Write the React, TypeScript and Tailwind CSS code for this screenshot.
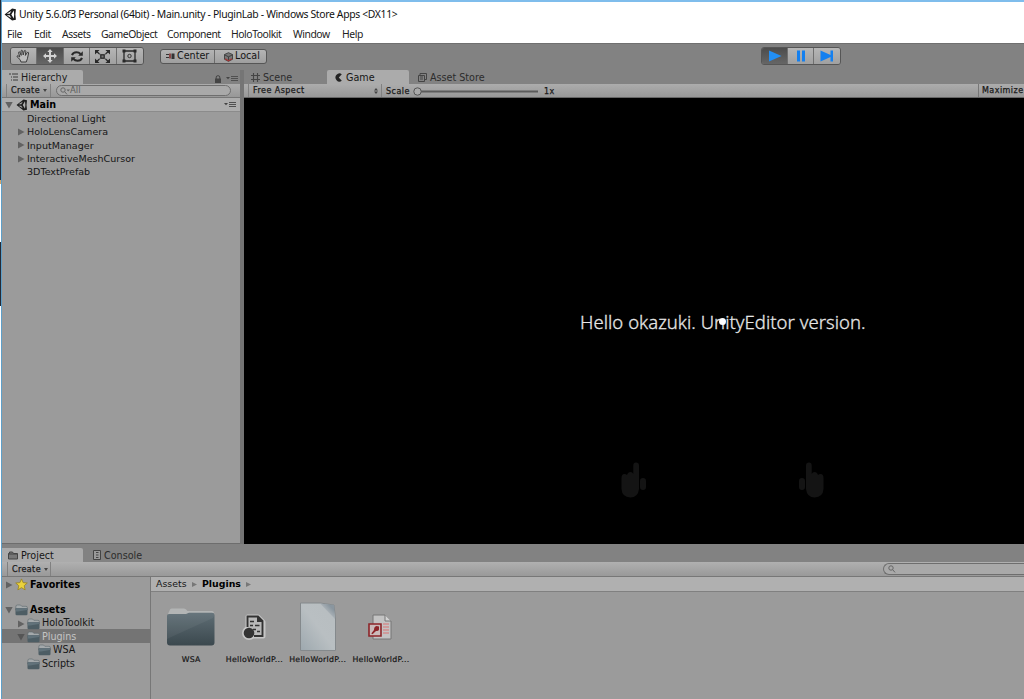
import { ReactNode } from 'react';

const menus = [
  { label: 'File', width: 'w-[27px]' },
  { label: 'Edit', width: 'w-[28px]' },
  { label: 'Assets', width: 'w-[39px]' },
  { label: 'GameObject', width: 'w-[66px]' },
  { label: 'Component', width: 'w-[64px]' },
  { label: 'HoloToolkit', width: 'w-[62px]' },
  { label: 'Window', width: 'w-[49px]' },
  { label: 'Help', width: 'w-[30px]' },
];

const sceneObjects = [
  { name: 'Directional Light', children: false },
  { name: 'HoloLensCamera', children: true },
  { name: 'InputManager', children: true },
  { name: 'InteractiveMeshCursor', children: true },
  { name: '3DTextPrefab', children: false },
];

function UnityLogo({ size = 12 }: { size?: number }) {
  return (
    <svg width={size} height={size} viewBox="0 0 24 24" className="shrink-0">
      <path
        d="M15 1 L1 12 L15 23 L22 21.5 L21 12 L22 2.5 Z M13.5 5.5 L10.5 10.5 H5 Z M5 13.5 H10.5 L13.5 18.5 Z M13.5 12 L18 4.5 L18.8 12 L18 19.5 Z"
        fill="#1c1c1c"
        fillRule="evenodd"
      />
    </svg>
  );
}

function Arrow({ open = false, light = false }: { open?: boolean; light?: boolean }) {
  return (
    <svg width="8" height="8" viewBox="0 0 8 8" fill={light ? '#555' : '#626262'} className="shrink-0">
      <path d={open ? 'M0.3 1 H7.7 L4 7.5 Z' : 'M1 0.5 L7.5 4 L1 7.5 Z'} />
    </svg>
  );
}

function PanelMenu() {
  return (
    <svg width="12" height="7" viewBox="0 0 12 7" className="shrink-0">
      <path d="M0 2 H4 L2 4.3 Z" fill="#444" />
      <path d="M5 1.5 H12 M5 3.5 H12 M5 5.5 H12" stroke="#505050" strokeWidth="1" />
    </svg>
  );
}

function Folder() {
  return (
    <svg width="13" height="12" viewBox="0 0 13 12" className="shrink-0">
      <path d="M0.8 3 Q0.8 1 2.2 1 H5.5 L6.8 2.3 H11 Q12.3 2.3 12.3 3.5 V6 H0.8 Z" fill="#a4a9ab" stroke="#5d686d" strokeWidth="0.6" />
      <path d="M0.5 4.2 H12.5 V10 Q12.5 11.2 11.3 11.2 H1.7 Q0.5 11.2 0.5 10 Z" fill="#4d5d64" />
      <path d="M1 4.6 H12 V6 L3 7.6 H1 Z" fill="#61727a" />
    </svg>
  );
}

function ToolButton({ active = false, last = false, children }: { active?: boolean; last?: boolean; children: ReactNode }) {
  return (
    <div
      className={`flex w-[26.6px] items-center justify-center ${last ? '' : 'border-r border-[#707070]'} ${
        active ? 'bg-linear-to-b from-[#4c4c4c] to-[#666]' : 'bg-linear-to-b from-[#b6b6b6] to-[#a0a0a0]'
      }`}
    >
      {children}
    </div>
  );
}

function Toolbar() {
  return (
    <div className="flex h-[27px] shrink-0 items-start border-t border-[#707070] bg-[#828282] pt-[3px] pl-[8px]">
      <div className="flex h-[18px] w-[134px] overflow-hidden rounded-[3px] border border-[#565656]">
        <ToolButton>
          <svg width="15" height="14" viewBox="0 0 15 14" fill="#bdbdbd" stroke="#3d3d3d" strokeWidth="1">
            <path d="M5 13 L4 10.5 L1.2 8 Q0.6 6.8 1.8 6.6 L3.8 8 L2.5 3.5 Q2.8 2.2 3.8 3.2 L5.2 6.4 L5 1.8 Q5.8 0.6 6.6 1.8 L7.2 6 L8.3 1.8 Q9.4 0.9 9.8 2.2 L9.4 6.4 L11.3 3.5 Q12.5 2.8 12.6 4 L11.4 9.8 L10.2 13 Z" />
          </svg>
        </ToolButton>
        <ToolButton active>
          <svg width="14" height="14" viewBox="0 0 14 14" fill="#d2d2d2">
            <path d="M7 0 L9.7 3 H8 V6 H11 V4.3 L14 7 L11 9.7 V8 H8 V11 H9.7 L7 14 L4.3 11 H6 V8 H3 V9.7 L0 7 L3 4.3 V6 H6 V3 H4.3 Z" />
          </svg>
        </ToolButton>
        <ToolButton>
          <svg width="14" height="13" viewBox="0 0 14 13">
            <path d="M2 5.2 Q3 2.3 6.5 2.3 Q9 2.3 10.5 4 M12 7.8 Q11 10.7 7.5 10.7 Q5 10.7 3.5 9" fill="none" stroke="#292929" strokeWidth="2" />
            <path d="M12.8 1.2 V5.8 H8.2 Z M1.2 11.8 V7.2 H5.8 Z" fill="#292929" />
          </svg>
        </ToolButton>
        <ToolButton>
          <svg width="15" height="13" viewBox="0 0 15 13" fill="#292929">
            <path d="M0 0 H4.6 L0 4.4 Z M15 0 V4.4 L10.4 0 Z M0 13 V8.6 L4.6 13 Z M15 13 H10.4 L15 8.6 Z" />
            <path d="M1 1 L14 12 M14 1 L1 12" stroke="#292929" strokeWidth="1.4" />
            <rect x="4.5" y="3.5" width="6" height="6" fill="#aaa" />
            <rect x="5.8" y="4.8" width="3.4" height="3.4" fill="#777" stroke="#292929" strokeWidth="1.3" />
          </svg>
        </ToolButton>
        <ToolButton last>
          <svg width="15" height="14" viewBox="0 0 15 14" fill="#292929">
            <path d="M2 2 H13 V12 H2 Z" fill="none" stroke="#292929" strokeWidth="1.3" />
            <path d="M0.5 0.5 H3.5 V3.5 H0.5 Z M11.5 0.5 H14.5 V3.5 H11.5 Z M0.5 10.5 H3.5 V13.5 H0.5 Z M11.5 10.5 H14.5 V13.5 H11.5 Z" />
            <circle cx="7.5" cy="7" r="1.7" fill="none" stroke="#333" />
          </svg>
        </ToolButton>
      </div>

      <div className="mt-[2px] ml-4 flex h-[15px] w-[107px] overflow-hidden rounded-[3px] border border-[#565656] bg-linear-to-b from-[#b4b4b4] to-[#9f9f9f] text-[9.6px] text-[#161616]">
        <div className="flex w-[54px] items-center gap-[2px] border-r border-[#6b6b6b] pl-[5px]">
          <svg width="9" height="7" viewBox="0 0 9 7" className="shrink-0">
            <path d="M0 1.5 H3 M0 4.5 H3" stroke="#333" />
            <path d="M3 0.5 H5 V5.5 H3 Z" fill="#8b4545" />
            <path d="M5.5 0.5 H8.5 V6 H5.5 Z" fill="#333" />
          </svg>
          <span>Center</span>
        </div>
        <div className="flex items-center gap-[2px] pl-[9px]">
          <svg width="9" height="10" viewBox="0 0 9 10" className="shrink-0">
            <path d="M0.5 2.5 L4.5 0.7 L8.5 2.5 V7.3 L4.5 9.3 L0.5 7.3 Z" fill="#777" stroke="#333" strokeWidth="0.8" />
            <path d="M0.5 2.8 L4.5 4.8 L8.5 2.8 M4.5 4.8 V9" fill="none" stroke="#333" strokeWidth="0.8" />
            <path d="M1 6.8 L4.5 8.8 L8 6.8" fill="none" stroke="#a03535" strokeWidth="1.3" />
          </svg>
          <span>Local</span>
        </div>
      </div>

      <div className="ml-[494px] flex h-[18px] w-[80px] overflow-hidden rounded-[3px] border border-[#565656]">
        <ToolButton active>
          <svg width="14" height="12" viewBox="0 0 14 12">
            <path d="M1 0.5 L13.5 6 L1 11.5 Z" fill="#228ff5" />
          </svg>
        </ToolButton>
        <ToolButton>
          <svg width="10" height="12" viewBox="0 0 10 12" fill="#1480f0">
            <path d="M1 0.5 H4 V11.5 H1 Z M6 0.5 H9 V11.5 H6 Z" />
          </svg>
        </ToolButton>
        <ToolButton last>
          <svg width="14" height="12" viewBox="0 0 14 12" fill="#1480f0">
            <path d="M0.5 0.5 L10.5 5 V0.5 H13 V11.5 H10.5 V7 L0.5 11.5 Z" />
          </svg>
        </ToolButton>
      </div>
    </div>
  );
}

function Hierarchy() {
  return (
    <div className="flex w-[238px] shrink-0 flex-col">
      <div className="flex h-[14px] shrink-0 items-center justify-between pr-[2px]">
        <div className="flex h-full w-[81px] items-center gap-[3px] rounded-tr-[2px] bg-[#ababab] pl-[7px] text-[9.6px] text-[#1c1c1c]">
          <svg width="9" height="9" viewBox="0 0 9 9" stroke="#3b3b3b" className="shrink-0">
            <path d="M0 1 H2 M3 1 H9 M2 4 H3 M4 4 H9 M2 7 H3 M4 7 H9" />
          </svg>
          <span className="pt-[2px]">Hierarchy</span>
        </div>
        <div className="flex items-center gap-[5px] pt-[3px]">
          <svg width="6" height="8" viewBox="0 0 6 8">
            <path d="M1.2 4 V2 Q1.2 0.7 3 0.7 Q4.8 0.7 4.8 2 V4" fill="none" stroke="#444" />
            <path d="M0 3.5 H6 V8 H0 Z" fill="#444" />
          </svg>
          <PanelMenu />
        </div>
      </div>
      <div className="flex h-[14px] shrink-0 items-center border-b border-[#777] bg-linear-to-b from-[#acacac] to-[#989898] pl-1">
        <div className="flex h-full w-[45px] items-center gap-[3px] border-x border-[#818181] pl-[4px] text-[8px] tracking-[0.4px] text-[#1a1a1a] [-webkit-text-stroke:0.25px_#1a1a1a]">
          <span className="pt-px">Create</span>
          <svg width="4" height="3" viewBox="0 0 4 3"><path d="M0 0 H4 L2 3 Z" fill="#444" /></svg>
        </div>
        <div className="ml-[5px] flex h-[11px] w-[175px] items-center rounded-full border border-[#6e6e6e] bg-[#a9a9a9] pl-[3px] text-[8.5px] text-[#5c5c5c]">
          <svg width="10" height="8" viewBox="0 0 10 8" fill="none" stroke="#666">
            <circle cx="3" cy="3" r="2.2" />
            <path d="M4.6 4.6 L7 7.4" />
            <path d="M6.5 2.5 H10 L8.2 4.6 Z" fill="#666" stroke="none" />
          </svg>
          All
        </div>
      </div>
      <div className="flex h-[14px] shrink-0 items-center border-b border-[#8b8b8b] bg-[#adadad] pr-1 pl-[3px]">
        <Arrow open />
        <div className="ml-[3px] flex flex-1 items-center gap-[2px] text-[9.6px] font-bold text-black">
          <UnityLogo />
          <span className="pt-[2px]">Main</span>
        </div>
        <PanelMenu />
      </div>
      <div className="flex-1 border-b border-[#6d6d6d] bg-[#9b9b9b] text-[9.55px] text-[#161616]">
        {sceneObjects.map((o) => (
          <div key={o.name} className="flex h-[13.4px] items-center pl-[15px]">
            <div className="w-[10px]">{o.children && <Arrow />}</div>
            <span className="pt-[0.6px]">{o.name}</span>
          </div>
        ))}
      </div>
    </div>
  );
}

function Hand({ flip = false }: { flip?: boolean }) {
  return (
    <svg width="26" height="36" viewBox="0 0 26 36" fill="#141414" className={flip ? '-scale-x-100' : ''}>
      <path d="M0.5 16 Q0.5 12 3.5 12 Q5 12 6 13 Q7 10 9.5 10 Q11.5 10 12.3 12 V3.5 Q12.3 0.5 15 0.5 Q18 0.5 18 3.5 V27 Q17 35.5 9.3 35.5 Q1 35 0.5 27 Z" />
      <rect x="19" y="16" width="6" height="12" rx="3" />
    </svg>
  );
}

function GameView() {
  return (
    <div className="flex min-w-0 flex-1 flex-col">
      <div className="flex h-[14px] shrink-0 text-[9.6px] text-[#2c2c2c]">
        <div className="flex w-[83px] items-center gap-[3px] pl-[7px]">
          <svg width="9" height="9" viewBox="0 0 9 9" stroke="#454545" strokeWidth="1.1">
            <path d="M2.5 0 V9 M6.5 0 V9 M0 2.5 H9 M0 6.5 H9" />
          </svg>
          <span className="pt-[2px]">Scene</span>
        </div>
        <div className="flex w-[82px] items-center gap-[3px] rounded-t-[2px] bg-[#ababab] pl-[7px] text-[#161616]">
          <svg width="9" height="9" viewBox="0 0 9 9">
            <path d="M7.8 1.2 A4 4 0 1 0 7.8 7.8 L4.8 4.5 Z" fill="#222" />
          </svg>
          <span className="pt-[2px]">Game</span>
        </div>
        <div className="flex items-center gap-[3px] pl-[9px]">
          <svg width="9" height="9" viewBox="0 0 9 9" fill="none" stroke="#444">
            <path d="M0.5 2.5 H6.5 V8.5 H0.5 Z M2 2.5 V0.5 H8.5 V6.5 H6.5 M2 4 H5 M2 6 H5" />
          </svg>
          <span className="pt-[2px]">Asset Store</span>
        </div>
      </div>
      <div className="flex h-[14px] shrink-0 items-center border-b border-[#666] bg-linear-to-b from-[#acacac] to-[#989898] text-[8px] tracking-[0.45px] text-[#1a1a1a] [-webkit-text-stroke:0.25px_#1a1a1a]">
        <div className="flex h-full w-[138px] items-center justify-between border-r border-[#818181] pr-[3px] pl-1">
          <div className="flex h-full items-center border-l border-[#818181] pt-px pl-1">Free Aspect</div>
          <svg width="4" height="6" viewBox="0 0 4 6" fill="#444"><path d="M0 2.5 L2 0 L4 2.5 Z M0 3.5 L2 6 L4 3.5 Z" /></svg>
        </div>
        <span className="ml-[4px] w-[27px] pt-[2px]">Scale</span>
        <svg width="126" height="9" viewBox="0 0 126 9" className="mt-px">
          <path d="M4 4.5 H125" stroke="#5b5b5b" strokeWidth="2" />
          <circle cx="4.5" cy="4.5" r="3.7" fill="#aaa" stroke="#555" />
        </svg>
        <span className="ml-[5px] flex-1 pt-[2px]">1x</span>
        <div className="flex h-full w-[46px] items-center border-l border-[#777] pt-px pl-[3px]">Maximize</div>
      </div>
      <div className="relative flex-1 overflow-hidden bg-black">
        <span className="absolute top-[211px] left-[336px] font-['Noto_Sans'] text-[18.5px] leading-[26px] font-light tracking-[0.03px] whitespace-nowrap text-[#e6e6e6] [-webkit-text-stroke:0.3px_#e6e6e6]">
          Hello okazuki. UnityEditor version.
        </span>
        <div className="absolute top-[220px] left-[475px] h-[7px] w-[7px] rounded-full bg-white" />
        <div className="absolute top-[364px] left-[377px]"><Hand /></div>
        <div className="absolute top-[364px] left-[554px]"><Hand flip /></div>
      </div>
    </div>
  );
}

function ProjectTree() {
  return (
    <div className="w-[149px] shrink-0 border-r border-[#777] bg-[#9b9b9b] text-[9.6px] text-[#161616]">
      <div className="flex h-[13.4px] items-center gap-[2px] pt-[2px] pl-[3px] font-bold text-black">
        <Arrow />
        <svg width="13" height="13" viewBox="0 0 14 14">
          <path d="M7 1 L8.8 5 L13.2 5.4 L9.9 8.3 L10.9 12.8 L7 10.4 L3.1 12.8 L4.1 8.3 L0.8 5.4 L5.2 5 Z" fill="#ead23c" stroke="#9b8420" strokeWidth="0.9" />
        </svg>
        Favorites
      </div>
      <div className="mt-[12.2px] flex h-[13.4px] items-center gap-[2px] pt-[2px] pl-[3px] font-bold text-black">
        <Arrow open />
        <Folder />
        <span>Assets</span>
      </div>
      <div className="flex h-[13.4px] items-center gap-[2px] pt-[2px] pl-[15px]"><Arrow /><Folder />HoloToolkit</div>
      <div className="flex h-[13.4px] items-center gap-[2px] bg-[#747474] pt-[2px] pl-[15px] text-[#c4c4c4]"><Arrow open light /><Folder />Plugins</div>
      <div className="flex h-[13.4px] items-center gap-[2px] pt-[2px] pl-[36px]"><Folder />WSA</div>
      <div className="flex h-[13.4px] items-center gap-[2px] pt-[2px] pl-[25px]"><Folder />Scripts</div>
    </div>
  );
}

function Asset({ name, children }: { name: string; children: ReactNode }) {
  return (
    <div className="flex w-[63.3px] flex-col items-center">
      <div className="flex h-[50px] items-center justify-center">{children}</div>
      <span className="mt-[3px] text-[7.8px] leading-[10px] tracking-[0.3px] whitespace-nowrap text-[#161616] [-webkit-text-stroke:0.2px_#161616]">{name}</span>
    </div>
  );
}

function Project() {
  return (
    <div className="flex min-h-0 flex-1 flex-col bg-[#828282] pt-[4px]">
      <div className="flex h-[14px] shrink-0 text-[9.6px]">
        <div className="flex w-[81px] items-center gap-[3px] rounded-tr-[2px] bg-[#ababab] pl-[6px] text-[#161616]">
          <svg width="10" height="9" viewBox="0 0 10 9" fill="#777" stroke="#444">
            <path d="M0.5 2.5 V8 H9.5 V2.5 H5.5 L4.5 1 H1.5 V2.5 Z M0.5 3 H9" />
          </svg>
          <span className="pt-[2px]">Project</span>
        </div>
        <div className="flex items-center gap-[3px] pl-[10px] text-[#2c2c2c]">
          <svg width="8" height="10" viewBox="0 0 8 10" fill="#999" stroke="#444">
            <path d="M0.5 0.5 H7.5 V9.5 H0.5 Z M3 2.5 H5.5 M3 5 H5.5 M3 7.5 H5.5" />
          </svg>
          <span className="pt-[2px]">Console</span>
        </div>
      </div>
      <div className="flex h-[15px] shrink-0 items-center justify-between border-b border-[#777] bg-linear-to-b from-[#b0b0b0] to-[#999] pl-[5px]">
        <div className="flex h-full w-[44px] items-center gap-[3px] border-x border-[#818181] pl-[4px] text-[8px] tracking-[0.4px] text-[#1a1a1a] [-webkit-text-stroke:0.25px_#1a1a1a]">
          <span className="pt-[2px]">Create</span>
          <svg width="4" height="3" viewBox="0 0 4 3"><path d="M0 0 H4 L2 3 Z" fill="#444" /></svg>
        </div>
        <div className="flex h-[12px] w-[141px] items-center rounded-l-full border border-r-0 border-[#6e6e6e] bg-[#a9a9a9] pl-1">
          <svg width="8" height="8" viewBox="0 0 8 8" fill="none" stroke="#666">
            <circle cx="3" cy="3" r="2.2" />
            <path d="M4.6 4.6 L7 7.4" />
          </svg>
        </div>
      </div>
      <div className="flex min-h-0 flex-1">
        <ProjectTree />
        <div className="flex-1 bg-[#9b9b9b]">
          <div className="flex h-[15px] items-center border-b border-[#808080] bg-[#b0b0b0] pt-px pl-[5px] text-[9.4px] text-[#161616]">
            <span className="w-[36px]">Assets</span>
            <svg width="5" height="5" viewBox="0 0 5 5"><path d="M0 0 L5 2.5 L0 5 Z" fill="#777" /></svg>
            <span className="ml-[5px] w-[44px] font-bold text-black">Plugins</span>
            <svg width="5" height="5" viewBox="0 0 5 5"><path d="M0 0 L5 2.5 L0 5 Z" fill="#777" /></svg>
          </div>
          <div className="flex pt-[10px] pl-[8.5px]">
            <Asset name="WSA">
              <svg width="50" height="42" viewBox="0 0 50 42">
                <defs>
                  <linearGradient id="folderFront" x1="0" y1="0" x2="0" y2="1">
                    <stop offset="0" stopColor="#5f6e75" />
                    <stop offset="1" stopColor="#3b484e" />
                  </linearGradient>
                </defs>
                <path d="M2 8 L4 3.5 Q4.5 2.5 6 2.5 H18 Q20 2.5 21.5 5 H46 Q48 5 48 8 V12 H2 Z" fill="#b3b5b5" />
                <path d="M1 10 Q1 8 3 8 H20 L23 6.8 H46 Q48.5 6.8 48.5 9 V36.5 Q48.5 39.5 45.5 39.5 H4 Q1 39.5 1 36.5 Z" fill="url(#folderFront)" />
                <path d="M1 12 Q1 8 3 8 H20 L23 6.8 H46 Q48.5 6.8 48.5 9 L47 12 L3 32 L1 33 Z" fill="#fff" opacity="0.05" />
              </svg>
            </Asset>
            <Asset name="HelloWorldP...">
              <svg width="24" height="26" viewBox="0 0 24 26" className="mr-px">
                <path d="M5.5 2.5 H16 L21.5 8 V22.5 H5.5 Z" fill="#b9b9b9" stroke="#c6c6c6" strokeWidth="4" strokeLinejoin="round" />
                <circle cx="7" cy="19" r="7" fill="#c6c6c6" />
                <path d="M5.5 13 V2.5 H16 L20.5 7 V22 H12" fill="#b9b9b9" stroke="#333" strokeWidth="1.9" />
                <path d="M15 2 V8 H21 Z" fill="#333" />
                <path d="M8 7.5 H12 M8 11.5 H11 M13 11.5 H17.5 M11 15.5 H14 M15 17.5 H18" stroke="#333" strokeWidth="1.7" />
                <circle cx="7" cy="19" r="5.3" fill="#333" />
              </svg>
            </Asset>
            <Asset name="HelloWorldP...">
              <svg width="38" height="50" viewBox="0 0 38 50">
                <defs>
                  <linearGradient id="page" x1="1" y1="0" x2="0" y2="1">
                    <stop offset="0" stopColor="#b7bdc0" />
                    <stop offset="0.5" stopColor="#b9bfc2" />
                    <stop offset="1" stopColor="#9da8ae" />
                  </linearGradient>
                  <linearGradient id="fold" x1="0" y1="1" x2="1" y2="0">
                    <stop offset="0.4" stopColor="#b4babe" />
                    <stop offset="0.75" stopColor="#8a969f" />
                  </linearGradient>
                </defs>
                <path d="M1.5 1 H21 L35 3 L36.5 17 V48.5 H1.5 Z" fill="url(#page)" stroke="#84898c" />
                <path d="M21 1.5 L35 3 L36 17 Z" fill="url(#fold)" />
              </svg>
            </Asset>
            <Asset name="HelloWorldP...">
              <svg width="24" height="26" viewBox="0 0 24 26" className="mr-[3px]">
                <path d="M5 1 H17 L23 7 V25 H5 Z" fill="#c3c3c3" stroke="#777" />
                <path d="M17 1 V7 H23" fill="#d2d2d2" stroke="#777" />
                <path d="M15 10 H21 M15 13 H21 M15 16 H21 M15 19 H21" stroke="#cf9a9a" strokeWidth="1.8" />
                <path d="M1 10 H13 V22 H1 Z" fill="#cbbaba" stroke="#8d2529" strokeWidth="1.6" />
                <path d="M3.3 19.5 L6 16 Q6 12.5 8.5 12 L11 12.5 V15.5 Q10.5 17.5 8 17 L4.5 20.3 Z" fill="#8d2529" />
              </svg>
            </Asset>
          </div>
        </div>
      </div>
    </div>
  );
}

function App() {
  return (
    <div className="flex h-[699px] w-[1024px] overflow-hidden bg-[#828282] font-['DejaVu_Sans',sans-serif]">
      <div className="flex w-[2px] shrink-0 flex-col border-r border-[#5d9fc9] bg-white">
        <div className="h-[180px] bg-[#252a35]" />
        <div className="h-[4px] bg-[#d9a566]" />
        <div className="mt-[58px] h-[64px] bg-[#252a35]" />
      </div>
      <div className="flex min-w-0 flex-1 flex-col">
        <div className="flex h-[27px] shrink-0 items-center gap-[2px] border-t-2 border-[#7fbdec] bg-white pl-[2px] font-['Noto_Sans',sans-serif] text-[10.4px] tracking-[-0.34px] text-[#111]">
          <UnityLogo size={13} />
          <span className="whitespace-nowrap">Unity 5.6.0f3 Personal (64bit) - Main.unity - PluginLab - Windows Store Apps &lt;DX11&gt;</span>
        </div>
        <div className="flex h-[16px] shrink-0 items-center bg-white pl-[5px] font-['Noto_Sans',sans-serif] text-[10.4px] tracking-[-0.45px] text-[#222]">
          {menus.map((m) => (
            <span key={m.label} className={`shrink-0 whitespace-nowrap ${m.width}`}>{m.label}</span>
          ))}
        </div>
        <Toolbar />
        <div className="flex h-[474px] shrink-0">
          <Hierarchy />
          <div className="w-[4px] shrink-0 bg-[#757575]" />
          <GameView />
        </div>
        <Project />
      </div>
    </div>
  );
}

export default App;
